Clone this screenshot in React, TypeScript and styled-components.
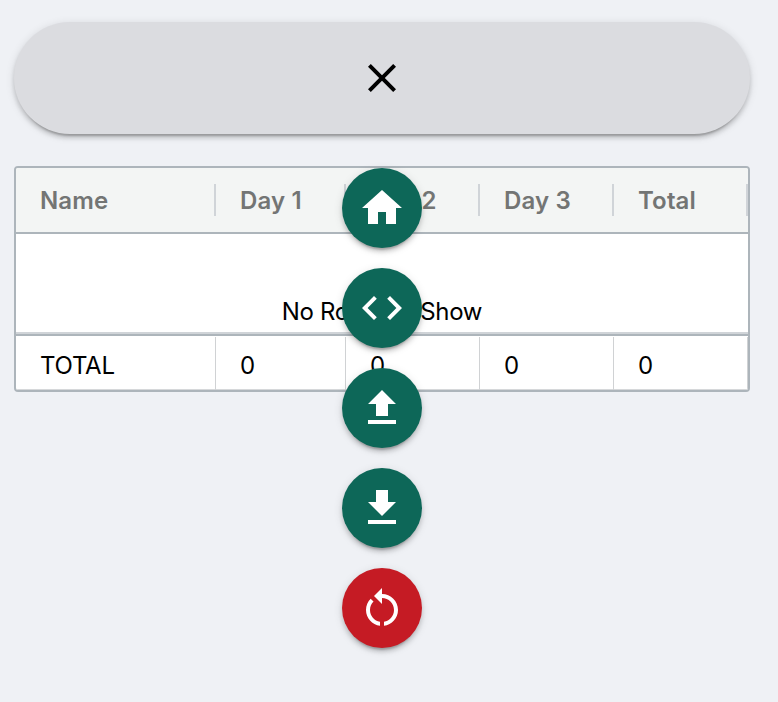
import React from "react";
import styled, { createGlobalStyle, css } from "styled-components";

const GlobalStyle = createGlobalStyle`
  *, *::before, *::after { box-sizing: border-box; }
  body {
    margin: 0;
    background: #eff1f5;
    color: #000;
    font-family: Inter, "Liberation Sans", sans-serif;
    font-size: 24px;
  }
`;

const raised = css`
  box-shadow:
    0 6px 2px -4px rgba(0, 0, 0, 0.2),
    0 4px 4px 0 rgba(0, 0, 0, 0.14),
    0 2px 10px 0 rgba(0, 0, 0, 0.12);
`;

const Page = styled.main`
  display: flex;
  flex-direction: column;
  gap: 32px;
  min-height: 100vh;
  padding: 22px 28px 0 14px;
`;

const FabArea = styled.div`
  position: relative;
`;

const MainButton = styled.button`
  display: flex;
  align-items: center;
  justify-content: center;
  width: 100%;
  height: 112px;
  padding: 0;
  border: 0;
  border-radius: 56px;
  background: #dbdce0;
  color: #000;
  ${raised}
`;

const FabList = styled.nav`
  position: absolute;
  z-index: 1;
  top: 146px;
  left: 50%;
  display: flex;
  flex-direction: column;
  gap: 20px;
  transform: translateX(-50%);
`;

const FabButton = styled.button<{ $danger?: boolean }>`
  display: grid;
  place-items: center;
  width: 80px;
  height: 80px;
  padding: 0;
  border: 0;
  border-radius: 50%;
  background: ${(p) => (p.$danger ? "#c51b24" : "#0d6758")};
  color: #fff;
  ${raised}
`;

const Icon = styled.svg`
  width: 48px;
  height: 48px;
  fill: currentColor;
`;

const Grid = styled.section`
  overflow: hidden;
  border: 2px solid #adb5bb;
  border-radius: 4px;
  background: #fff;
`;

const Row = styled.div`
  display: grid;
  grid-template-columns: 200px 130px 134px 134px 134px;
`;

const HeaderRow = styled(Row)`
  align-items: center;
  height: 66px;
  border-bottom: 2px solid #adb5bb;
  background: #f3f5f4;
`;

const HeaderCell = styled.div`
  height: 32px;
  padding-left: 24px;
  border-right: 2px solid #d0d4d8;
  color: #737574;
  font-weight: 600;
  letter-spacing: 0.15px;
  line-height: 33px;
`;

const EmptyBody = styled.div`
  height: 100px;
  padding-top: 62px;
  border-bottom: 2px solid #d0d4d8;
  letter-spacing: -0.33px;
  line-height: 32px;
  text-align: center;
`;

const TotalRow = styled(Row)`
  height: 56px;
  padding-top: 1px;
  border-top: 2px solid #adb5bb;
  border-bottom: 1px solid #d6d8da;
`;

const TotalCell = styled.div`
  padding-left: 24px;
  border-right: 1px solid #d0d2d4;
  letter-spacing: -0.25px;
  line-height: 58px;
`;

const columns = ["Name", "Day 1", "Day 2", "Day 3", "Total"];
const totals = ["TOTAL", "0", "0", "0", "0"];

const closePath =
  "M19 6.41 17.59 5 12 10.59 6.41 5 5 6.41 10.59 12 5 17.59 6.41 19 12 13.41 17.59 19 19 17.59 13.41 12z";

const actions = [
  { label: "Home", path: "M10 20v-6h4v6h5v-8h3L12 3 2 12h3v8z" },
  {
    label: "Code",
    path: "M9.4 16.6 4.8 12l4.6-4.6L8 6l-6 6 6 6 1.4-1.4zm5.2 0 4.6-4.6-4.6-4.6L16 6l6 6-6 6-1.4-1.4z",
  },
  { label: "Upload", path: "M9 16h6v-6h4l-7-7-7 7h4v6zm-4 2h14v2H5v-2z" },
  { label: "Download", path: "M19 9h-4V3H9v6H5l7 7 7-7zM5 18v2h14v-2H5z" },
  {
    label: "Reset",
    danger: true,
    path: "M12 5V2L8 6l4 4V7c3.31 0 6 2.69 6 6 0 2.97-2.17 5.43-5 5.91v2.02c3.95-.49 7-3.85 7-7.93 0-4.42-3.58-8-8-8zM6 13c0-1.65.67-3.15 1.76-4.24L6.34 7.34C4.9 8.79 4 10.79 4 13c0 4.08 3.05 7.44 7 7.93v-2.02c-2.83-.48-5-2.94-5-5.91z",
  },
];

export default function App() {
  return (
    <>
      <GlobalStyle />
      <Page>
        <FabArea>
          <MainButton aria-label="Close">
            <Icon viewBox="0 0 24 24">
              <path d={closePath} />
            </Icon>
          </MainButton>
          <FabList>
            {actions.map((a) => (
              <FabButton key={a.label} aria-label={a.label} $danger={a.danger}>
                <Icon viewBox="0 0 24 24">
                  <path d={a.path} />
                </Icon>
              </FabButton>
            ))}
          </FabList>
        </FabArea>
        <Grid>
          <HeaderRow>
            {columns.map((c) => (
              <HeaderCell key={c}>{c}</HeaderCell>
            ))}
          </HeaderRow>
          <EmptyBody>No Rows To Show</EmptyBody>
          <TotalRow>
            {totals.map((t, i) => (
              <TotalCell key={columns[i]}>{t}</TotalCell>
            ))}
          </TotalRow>
        </Grid>
      </Page>
    </>
  );
}
